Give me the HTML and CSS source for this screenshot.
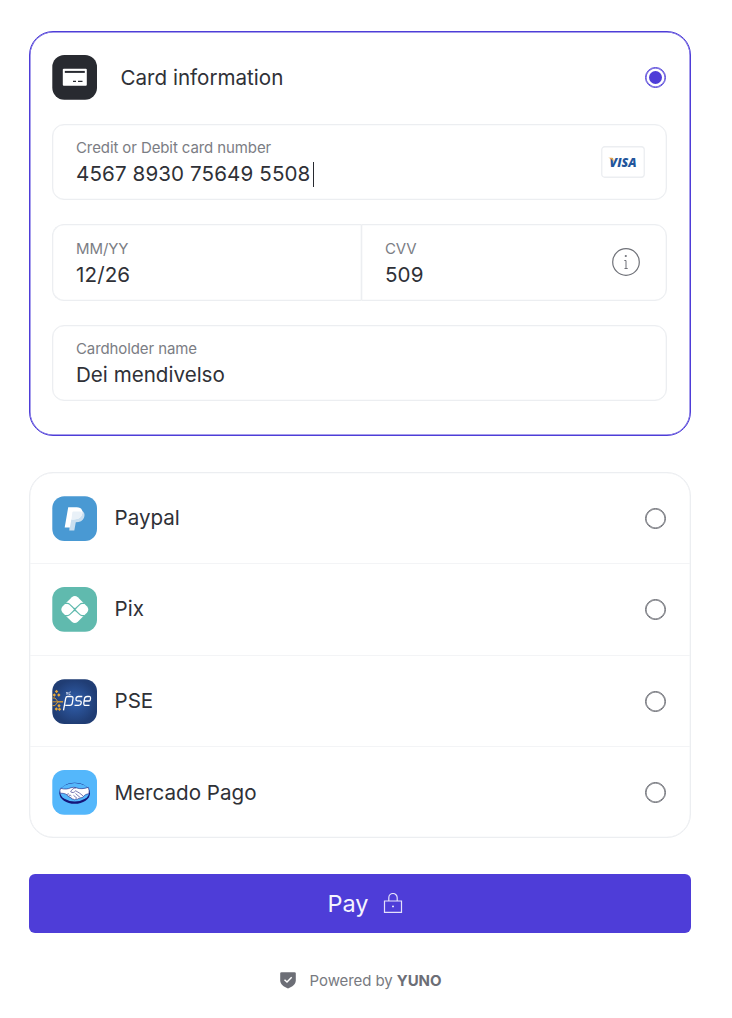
FILE: index.html
```
<!DOCTYPE html>
<html lang="en">
<head>
<meta charset="utf-8">
<title>Checkout</title>
<link rel="stylesheet" href="styles.css">
</head>
<body>
<main class="checkout">
  <section class="card-panel">
    <header class="card-head">
      <svg class="method-icon" viewBox="0 0 45 45">
        <rect x=".3" width="44.700" height="44.700" rx="12" fill="#282a30"/>
        <rect x="10.800" y="13.700" width="24" height="17" rx="1" fill="#fff"/>
        <path d="M12.800 16.900h20" stroke="#282a30" stroke-width="2"/>
        <path d="M21 26.300h3M26 26.300h4.500" stroke="#282a30" stroke-width="1.300"/>
      </svg>
      <h1 class="card-title">Card information</h1>
      <span class="radio radio-on"></span>
    </header>
    <div class="field">
      <div class="field-text">
        <span class="label">Credit or Debit card number</span>
        <span class="value value-number">4567 8930 75649 5508<i class="caret"></i></span>
      </div>
      <svg class="visa" viewBox="0 0 44 32">
        <rect x=".75" y=".75" width="42.5" height="30.5" rx="3" fill="#fff" stroke="#eceef1" stroke-width="1.3"/>
        <text x="8.6" y="20.9" class="visa-text" textLength="27" lengthAdjust="spacingAndGlyphs">VISA</text>
        <path d="M7.300 11.700h3.300c.9 0 1.300.4 1.500 1.100l.8 3.600c-.9-2.200-2.800-3.900-5.600-4.700z" fill="#e9a23b"/>
      </svg>
    </div>
    <div class="field-row">
      <div class="field cell-expiry">
        <div class="field-text">
          <span class="label">MM/YY</span>
          <span class="value value-number">12/26</span>
        </div>
      </div>
      <div class="field cell-cvv">
        <div class="field-text">
          <span class="label">CVV</span>
          <span class="value value-number">509</span>
        </div>
        <svg class="info" viewBox="0 0 28 28" fill="none" stroke="#6f7178">
          <circle cx="14" cy="14" r="13.3" stroke-width="1.2"/>
          <path d="M12.300 12.500H14v8M12.500 20.500h3.200" stroke-width="1"/>
          <circle cx="13.800" cy="8" r="1.100" fill="#6f7178" stroke="none"/>
        </svg>
      </div>
    </div>
    <div class="field">
      <div class="field-text">
        <span class="label">Cardholder name</span>
        <span class="value">Dei mendivelso</span>
      </div>
    </div>
  </section>

  <section class="methods">
    <div class="method">
      <svg class="method-icon" viewBox="0 0 45 45">
        <rect x=".3" y=".3" width="44.700" height="44.700" rx="12" fill="#4999d3"/>
        <path d="M18.500 14h9c4.300.800 6.100 4 4.500 7.700-1.300 3.200-4 4.500-8.200 4.500l-1.500 8.200h-5z" fill="#c9dff0"/>
        <path d="M16.200 11.300h8.500c4.300 0 6.400 2.600 5.600 6.300-.9 4-3.800 5.800-8.600 5.800h-2.400l-1.400 8.200h-5.200z" fill="#fff"/>
        <path d="M19.500 23.400l.7-6.500c.2-.8.600-1.300 1.500-1.300h6.300c1 0 1.900.2 2.400.6-.4 4.800-3.500 7.200-8.700 7.200z" fill="#e9f1f8"/>
      </svg>
      <span class="method-name">Paypal</span>
      <span class="radio"></span>
    </div>
    <div class="method">
      <svg class="method-icon" viewBox="0 0 45 45">
        <rect x=".3" width="44.700" height="44.700" rx="12" fill="#60baae"/>
        <path d="M19.800 10.200q3-2.400 6 0l9.300 9.300q2.400 3 0 6l-9.300 9.300q-3 2.400-6 0l-9.300-9.300q-2.400-3 0-6z" fill="#fff"/>
        <path d="M13 16.400h2.500q1.300 0 2.200.9l3.800 3.700q1.300 1.200 2.600 0l3.800-3.700q.9-.9 2.200-.9h2.500M13 28.600h2.500q1.300 0 2.200-.9l3.800-3.700q1.300-1.200 2.600 0l3.800 3.700q.9.900 2.200.9h2.500M21.400 21l2.800 3M24.200 21l-2.800 3" fill="none" stroke="#60baae" stroke-width="1.100"/>
      </svg>
      <span class="method-name">Pix</span>
      <span class="radio"></span>
    </div>
    <div class="method">
      <svg class="method-icon" viewBox="0 0 45 45">
        <defs><radialGradient id="pse"><stop stop-color="#3160ae"/><stop offset="1" stop-color="#203d74"/></radialGradient></defs>
        <rect x=".3" y=".3" width="44.700" height="44.700" rx="12" fill="url(#pse)"/>
        <g fill="none" stroke="#d59b36" stroke-width="1">
          <path d="M.5 19h2.500l3 3.800h5M.5 22.800h10.500M.5 26.600h2.500l3-3.800"/>
        </g>
        <g fill="#e8aa3b">
          <path d="M4.500 10.800l1.700 1.700-1.700 1.700-1.700-1.700zM2.300 14.300L4 16l-1.700 1.700L.6 16zM6.800 14.300L8.500 16l-1.700 1.700L5.100 16zM7 25l1.700 1.700L7 28.400l-1.700-1.700zM4.300 28.300L6 30l-1.700 1.700L2.600 30zM7.500 28.600l1.700 1.700L7.500 32l-1.700-1.700z"/>
        </g>
        <g fill="none" stroke="#fff" stroke-width="1.300" stroke-linejoin="round">
          <path d="M11.500 31.300l2.200-12q.3-1.800 2-1.800h3.400q2.200 0 1.900 2l-.7 4.700q-.3 2.200-2.400 2.200h-4.600"/>
          <path d="M30.300 17.500h-4q-2 0-2.300 2.200t1.700 2.200h1.800q2 0 1.700 2.200t-2.300 2.300h-4.400"/>
          <path d="M32 22h5.300q1 0 1.200-2.400t-1.700-2.100h-1.700q-2.200 0-2.600 2.200l-.7 4.200q-.3 2.500 1.700 2.500h4"/>
        </g>
        <path d="M14.300 13l1.300 2.500M16 13l-1.500 2.500M17.200 13l-.4 2.500M18.900 13h-1.200M18.600 15.500h-1.700" stroke="#d5dff2" stroke-width=".8"/>
      </svg>
      <span class="method-name">PSE</span>
      <span class="radio"></span>
    </div>
    <div class="method">
      <svg class="method-icon" viewBox="0 0 45 45">
        <rect x=".3" width="44.700" height="44.700" rx="12" fill="#54b7fb"/>
        <ellipse cx="22.700" cy="23.300" rx="15.300" ry="10.500" fill="#15167b"/>
        <ellipse cx="22.700" cy="22.200" rx="14.500" ry="9.300" fill="#54b7fb"/>
        <path d="M8.500 18.300c4.500 1.300 7.500.800 10.500-.6q3-.9 5.500.2c3.600 1.300 7 .9 11.900-.5q1.200 3.500.5 6.400c-3 .2-4.500 1.400-5.700 3q-1.200 1.400-2.400.8-.9 1.500-2.500.9-1 1.500-2.500.5-1.300 1.500-2.700 0-1.800.4-2-1.300-2 .1-2.200-1.400-1.800-.2-2-1.600c-2-1.300-4-1.400-6.600-1.500q-.9-2.500.2-4.900z" fill="#fff" stroke="#20207f" stroke-width=".6"/>
        <path d="M24 17.800c-3 .3-4.300 2-5.300 4 1.700 1.400 3.500.7 5-1q4.300 2.200 7.600 5.300M23.500 23.500l4.500 3.900M21.500 25.300l3.500 3M15 24.500q1.300-1.500 2.300 0M17 26q1.500-1.500 2.400 0" fill="none" stroke="#20207f" stroke-width=".6"/>
      </svg>
      <span class="method-name">Mercado Pago</span>
      <span class="radio"></span>
    </div>
  </section>

  <button class="pay" type="button">
    <span>Pay</span>
    <svg class="lock" viewBox="0 0 20 22" fill="none" stroke="#e4e1fb" stroke-width="1.200">
      <path d="M1.500 8h17v11.300h-17zM5.800 8V4.700a4.200 4.200 0 0 1 8.400 0V8"/>
      <circle cx="10" cy="13.400" r=".9" fill="#fff" stroke="none"/>
    </svg>
  </button>

  <footer class="powered">
    <svg class="shield" viewBox="0 0 16 17">
      <path d="M1.500.3h13q1.300 0 1.300 1.300v6.600c0 4-3.500 6.500-7.800 8.200C3.700 14.700.2 12.200.2 8.200V1.600Q.2.3 1.500.3z" fill="#6c6e76"/>
      <path d="M4.500 7.700L7 10l4.700-4.700" fill="none" stroke="#fff" stroke-width="1.500"/>
    </svg>
    <span>Powered by <b>YUNO</b></span>
  </footer>
</main>
</body>
</html>
```
FILE: styles.css
```
* { box-sizing: border-box; }
body { margin: 0; background: #fff; color: #2f3137; font-family: Inter, "Liberation Sans", sans-serif; }
svg { display: block; flex: none; }
.checkout { width: 662px; padding-top: 31px; margin-left: 29px; }
.card-panel {
  height: 405px;
  padding: 23px 23px 0 22px;
  border: 1px solid #4e3dd8;
  box-shadow: inset 0 0 0 .5px #4e3dd8;
  border-radius: 24px;
}
.card-head { display: flex; align-items: center; height: 45px; padding-right: 1px; margin-bottom: 23.500px; }
.method-icon { width: 45px; height: 45px; }
.card-title { margin: 0 auto 0 23.500px; font-size: 20.600px; font-weight: 400; line-height: 30px; }
.radio { flex: none; width: 21px; height: 21px; border: 1px solid #66686f; border-radius: 50%; box-shadow: inset 0 0 0 .5px #66686f; }
.radio-on { display: grid; place-items: center; border-color: #4e3dd8; box-shadow: inset 0 0 0 .5px #4e3dd8; }
.radio-on::after { content: ""; width: 13px; height: 13px; border-radius: 50%; background: #4e3dd8; }
.field {
  display: flex;
  align-items: center;
  justify-content: space-between;
  height: 76.500px;
  margin-bottom: 24px;
  padding: 0 21px 0 23px;
  border: 1px solid #eceef1;
  box-shadow: inset 0 0 0 .3px #eceef1;
  border-radius: 12px;
}
.field-text { display: flex; flex-direction: column; padding-top: 2.500px; }
.label { font-size: 15px; line-height: 22px; letter-spacing: -.1px; color: #7b7d84; }
.value { display: flex; align-items: center; font-size: 20.600px; line-height: 30px; }
.value-number { letter-spacing: .1px; }
.caret { width: 1px; height: 25px; margin-left: 3px; background: #282a30; }
.visa { width: 44px; height: 32px; }
.visa-text { font: italic 800 12.500px "Open Sans", sans-serif; fill: #22559b; }
.field-row { display: flex; }
.cell-expiry { width: 309px; border-right: 0; border-radius: 12px 0 0 12px; }
.cell-cvv { flex: 1; padding-right: 26px; border-radius: 0 12px 12px 0; }
.info { width: 28px; height: 28px; }
.methods { height: 366px; margin-top: 36px; border: 1px solid #eceef1; box-shadow: inset 0 0 0 .3px #eceef1; border-radius: 24px; }
.method { display: flex; align-items: center; height: 91.700px; padding: 0 24px 0 22px; border-top: 1px solid #f3f4f6; }
.method:first-child { height: 90px; border-top: 0; }
.method-name { margin: 0 auto 0 17.500px; font-size: 20.600px; line-height: 30px; }
.pay {
  display: flex;
  align-items: center;
  justify-content: center;
  gap: 14px;
  width: 662px;
  height: 59px;
  margin-top: 36px;
  padding: 0 0 0 10px;
  border: 0;
  border-radius: 6px;
  background: #4e3dd8;
  color: #f5f4fe;
  font: 400 23.500px Inter, "Liberation Sans", sans-serif;
}
.lock { width: 20px; height: 22px; }
.powered { display: flex; align-items: center; justify-content: center; gap: 14px; margin-top: 35px; padding-left: 1px; height: 24px; font-size: 15px; letter-spacing: -.08px; color: #787a81; }
.powered b { font-weight: 700; color: #6c6e76; }
.shield { width: 16px; height: 17px; }
```
